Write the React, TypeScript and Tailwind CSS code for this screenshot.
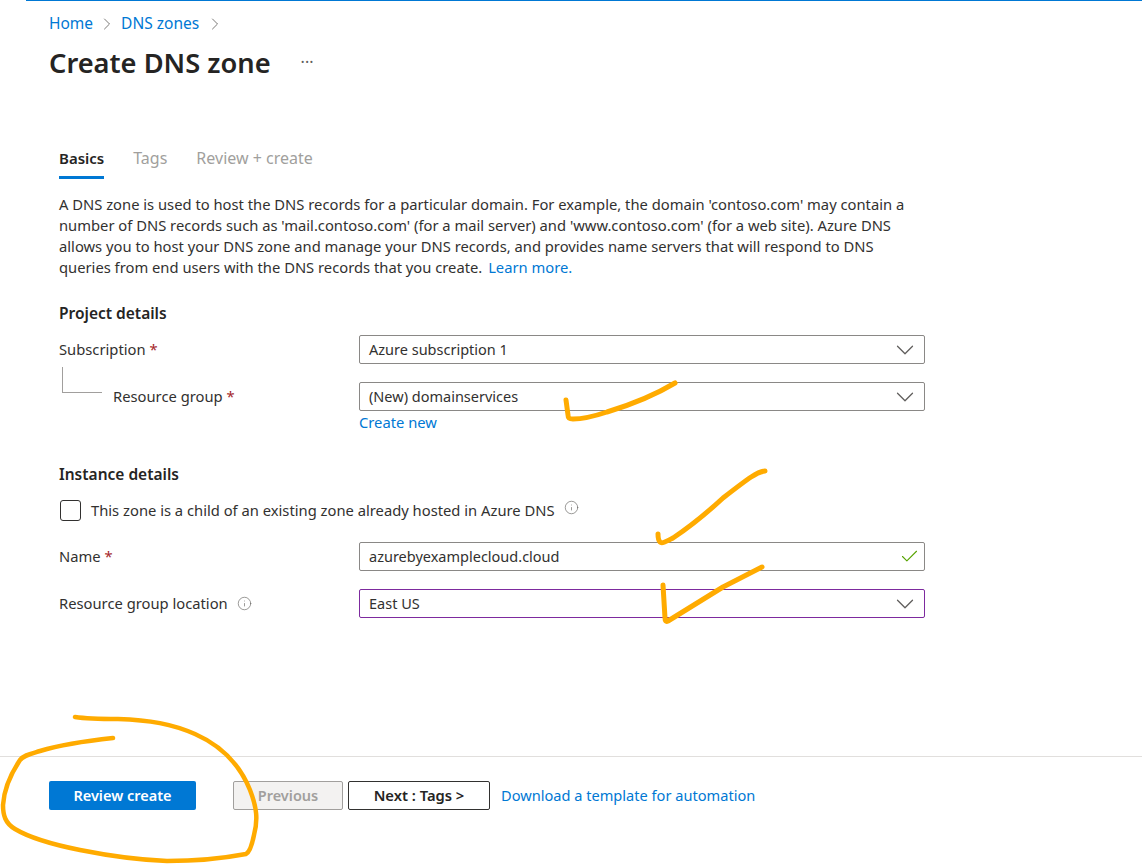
import React from 'react';
import { ChevronDown, ChevronRight, Check, Info } from 'lucide-react';

const Star = () => <span className="text-[#a4262c] ml-1">*</span>;

const Field = ({ value, tone = 'border-[#8a8886]', icon }: { value: string; tone?: string; icon?: React.ReactNode }) => (
  <div className={`w-[566px] h-[29px] border rounded-[2px] flex items-center justify-between pl-[9px] pr-[4px] ${tone}`}>
    <span className="text-[#323130] text-[14.5px]">{value}</span>
    {icon ?? <ChevronDown className="w-[30px] h-[30px] text-[#605e5c]" strokeWidth={1} />}
  </div>
);

const Annotations = () => (
  <svg className="absolute inset-0 pointer-events-none" width="1142" height="865" fill="none" stroke="#ffab00" strokeWidth="5" strokeLinecap="round" strokeLinejoin="round">
    <path d="M675 383C660 392 640 402 607 412C592 417 582 419 573 419C569 419 568 418 568 415L566 400" />
    <path d="M765 471C757 472 750 477 723 498C710 510 697 522 673 538C667 541 662 544 660 542C658 540 658 537 658 534" />
    <path d="M762 567L723 587L668 621C666 622 665 621 665 618L663 585" />
    <path d="M75 717C88 719 100 719 118 719C150 720 172 724 195 734C222 746 240 765 250 790C257 808 258 820 254 835C252 845 250 852 246 854C225 858 195 861 167 861C140 860 110 856 80 850C55 845 30 838 15 829C5 823 3 815 3 805C4 790 10 775 20 760C24 755 30 754 40 751C60 745 85 741 113 738" strokeWidth="4.5" />
  </svg>
);

export default function App() {
  return (
    <div className="relative h-[865px] overflow-hidden bg-white text-[14.75px] text-[#323130] font-['Noto_Sans',sans-serif]">
      <div className="ml-[26px] h-px bg-[#0078d4]" />

      <nav className="flex items-center h-[20px] mt-[13px] pl-[49px] text-[#0078d4] text-[15.5px]">
        <span>Home</span>
        <ChevronRight className="w-[20px] h-[20px] mx-[4px] text-[#605e5c]" strokeWidth={1} />
        <span>DNS zones</span>
        <ChevronRight className="w-[20px] h-[20px] mx-[6px] text-[#605e5c]" strokeWidth={1} />
      </nav>

      <div className="flex items-center h-[40px] mt-[9px] pl-[49px]">
        <h1 className="text-[27.25px] font-semibold text-[#252423]">Create DNS zone</h1>
        <span className="ml-[30px] text-[16px] leading-none text-[#605e5c] -mt-[2px]">···</span>
      </div>

      <div className="flex mt-[60px] pl-[59px] text-[16px] h-[36px]">
        <span className="font-semibold text-[15px] text-[#252423] border-b-[3px] border-[#0078d4] h-[36px] leading-[30px]">Basics</span>
        <span className="ml-[29px] text-[#a19f9d] leading-[30px]">Tags</span>
        <span className="ml-[29px] text-[#a19f9d] leading-[30px]">Review + create</span>
      </div>

      <main className="pl-[59px]">
        <p className="mt-[15px] leading-[21px] whitespace-nowrap">
          A DNS zone is used to host the DNS records for a particular domain. For example, the domain 'contoso.com' may contain a<br />
          number of DNS records such as 'mail.contoso.com' (for a mail server) and 'www.contoso.com' (for a web site). Azure DNS<br />
          allows you to host your DNS zone and manage your DNS records, and provides name servers that will respond to DNS<br />
          queries from end users with the DNS records that you create. <span className="ml-[2px] text-[#0078d4]">Learn more.</span>
        </p>

        <h2 className="mt-[25px] h-[20px] leading-[20px] font-semibold text-[15.5px] text-[#252423]">Project details</h2>

        <div className="flex items-center mt-[12px]">
          <label className="w-[300px]">Subscription<Star /></label>
          <Field value="Azure subscription 1" />
        </div>

        <div className="flex items-center mt-[18px] relative">
          <span className="absolute left-[3px] -top-[15px] w-[40px] h-[26px] border-l border-b border-[#a19f9d]" />
          <label className="w-[300px] pl-[54px]">Resource group<Star /></label>
          <Field value="(New) domainservices" />
        </div>
        <a className="block ml-[300px] mt-[1px] h-[20px] leading-[20px] text-[#0078d4]">Create new</a>

        <h2 className="mt-[32px] h-[20px] leading-[20px] font-semibold text-[15.5px] text-[#252423]">Instance details</h2>

        <div className="flex items-center mt-[16px] h-[21px]">
          <span className="ml-px w-[21px] h-[21px] border border-[#323130] rounded-[3px]" />
          <span className="ml-[10px]">This zone is a child of an existing zone already hosted in Azure DNS</span>
          <Info className="ml-[9px] -mt-[6px] w-[15px] h-[15px] text-[#605e5c]" strokeWidth={1} />
        </div>

        <div className="flex items-center mt-[21px]">
          <label className="w-[300px]">Name<Star /></label>
          <Field value="azurebyexamplecloud.cloud" icon={<Check className="w-[21px] h-[21px] text-[#57a300]" strokeWidth={1.25} />} />
        </div>

        <div className="flex items-center mt-[18px]">
          <label className="w-[300px] flex items-center">
            Resource group location
            <Info className="ml-[9px] w-[15px] h-[15px] text-[#605e5c]" strokeWidth={1} />
          </label>
          <Field value="East US" tone="border-[#7d2a9e]" />
        </div>
      </main>

      <footer className="absolute left-0 right-0 top-[756px] border-t border-[#e1dfdd] pt-[24px] pl-[49px] flex items-center">
        <button className="w-[147px] h-[29px] bg-[#0078d4] rounded-[2px] text-white text-[14.5px] font-semibold">Review create</button>
        <button className="ml-[37px] w-[110px] h-[29px] bg-[#f3f2f1] border border-[#a19f9d] rounded-[2px] text-[#a19f9d] text-[14.5px] font-semibold">Previous</button>
        <button className="ml-[5px] w-[142px] h-[29px] border border-[#323130] rounded-[2px] font-semibold text-[#252423]">Next : Tags &gt;</button>
        <a className="ml-[11px] text-[#0078d4] text-[14.6px]">Download a template for automation</a>
      </footer>

      <Annotations />
    </div>
  );
}
